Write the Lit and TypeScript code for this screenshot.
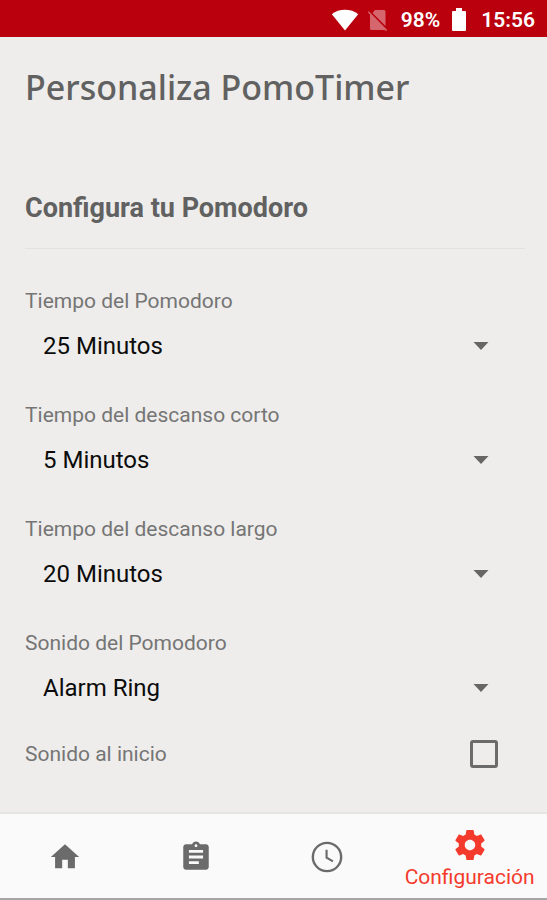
import { LitElement, html, css, svg } from "lit";
import { customElement, property, state } from "lit/decorators.js";
import { classMap } from "lit/directives/class-map.js";

interface Setting {
  id: string;
  label: string;
  value: string;
  options: string[];
}

const SETTINGS: Setting[] = [
  { id: "pomodoro", label: "Tiempo del Pomodoro", value: "25 Minutos", options: ["20 Minutos", "25 Minutos", "30 Minutos"] },
  { id: "short", label: "Tiempo del descanso corto", value: "5 Minutos", options: ["5 Minutos", "10 Minutos"] },
  { id: "long", label: "Tiempo del descanso largo", value: "20 Minutos", options: ["15 Minutos", "20 Minutos", "30 Minutos"] },
  { id: "sound", label: "Sonido del Pomodoro", value: "Alarm Ring", options: ["Alarm Ring"] },
];

const TABS = [
  { label: "Inicio", icon: svg`<path d="M10 20v-6h4v6h5v-8h3L12 3 2 12h3v8z"/>` },
  {
    label: "Tareas",
    icon: svg`<path d="M19 3h-4.18C14.4 1.84 13.3 1 12 1s-2.4.84-2.82 2H5c-1.1 0-2 .9-2 2v14c0 1.1.9 2 2 2h14c1.1 0 2-.9 2-2V5c0-1.1-.9-2-2-2zm-7 0c.55 0 1 .45 1 1s-.45 1-1 1-1-.45-1-1 .45-1 1-1zm2 14H7v-2h7v2zm3-4H7v-2h10v2zm0-4H7V7h10v2z"/>`,
  },
  {
    label: "Historial",
    icon: svg`<g fill="none" stroke="currentColor"><circle cx="12" cy="12" r="10" stroke-width="1.7"/><path d="M11.7 6.900v5.500l4.500 2.700" stroke-width="1.500"/></g>`,
  },
  {
    label: "Configuración",
    icon: svg`<path d="M19.43 12.98c.04-.32.07-.64.07-.98s-.03-.66-.07-.98l2.11-1.65c.19-.15.24-.42.12-.64l-2-3.46c-.12-.22-.39-.3-.61-.22l-2.49 1c-.52-.4-1.08-.73-1.69-.98l-.38-2.65C14.46 2.18 14.25 2 14 2h-4c-.25 0-.46.18-.49.42l-.38 2.65c-.61.25-1.17.59-1.69.98l-2.49-1c-.23-.09-.49 0-.61.22l-2 3.46c-.13.22-.07.49.12.64l2.11 1.65c-.04.32-.07.65-.07.98s.03.66.07.98l-2.11 1.65c-.19.15-.24.42-.12.64l2 3.46c.12.22.39.3.61.22l2.49-1c.52.4 1.08.73 1.69.98l.38 2.65c.03.24.24.42.49.42h4c.25 0 .46-.18.49-.42l.38-2.65c.61-.25 1.17-.59 1.69-.98l2.49 1c.23.09.49 0 .61-.22l2-3.46c.12-.22.07-.49-.12-.64l-2.11-1.65zM12 15.5c-1.93 0-3.5-1.57-3.5-3.5s1.57-3.5 3.5-3.5 3.5 1.57 3.5 3.5-1.57 3.5-3.5 3.5z"/>`,
  },
];

@customElement("status-bar")
class StatusBar extends LitElement {
  static styles = css`
    :host {
      display: flex;
      align-items: center;
      justify-content: flex-end;
      height: 37px;
      padding: 2px 12px 0 0;
      box-sizing: border-box;
      background: #ba000d;
      color: #fff;
      font-size: 21px;
      font-weight: 600;
      line-height: 24px;
    }
    svg { display: block; fill: currentColor; }
    .nosim { margin: 0 13px 0 8px; opacity: 0.4; }
    .battery { margin: 0 15px 0 12px; }
  `;
  render() {
    return html`
      <svg width="28" height="22" viewBox="0 0 28 22" aria-hidden="true">
        <path d="M14 21.5.8 5.200C4.500 2.200 9 .8 14 .8s9.500 1.400 13.200 4.400z" />
      </svg>
      <svg class="nosim" width="21" height="22" viewBox="0 0 21 22" aria-hidden="true">
        <path d="M8 1h9q1.500 0 1.500 1.500V17L5.500 4zM1.800 2.200.8 3.300 3 5.600V19.500Q3 21 4.500 21H17.500l1.800 1 .9-1z" />
      </svg>
      <span>98%</span>
      <svg class="battery" width="14" height="24" viewBox="0 0 14 24" aria-hidden="true">
        <path d="M4 0h6v3h3q1 0 1 1v18q0 1-1 1H1q-1 0-1-1V4q0-1 1-1h3z" />
      </svg>
      <span>15:56</span>
    `;
  }
}

@customElement("setting-select")
class SettingSelect extends LitElement {
  static styles = css`
    :host { display: block; }
    label { display: block; font-size: 21px; line-height: 28px; color: #757575; }
    .field { position: relative; margin-top: 9px; }
    select {
      appearance: none;
      display: block;
      width: 100%;
      height: 44px;
      padding: 0 64px 0 18px;
      border: 0;
      background: transparent;
      color: #0c0c0c;
      font: inherit;
      font-size: 24px;
    }
    svg { position: absolute; right: 36px; top: 18px; fill: #666; pointer-events: none; }
  `;
  @property({ attribute: false }) setting!: Setting;
  render() {
    const s = this.setting;
    return html`
      <label for=${s.id}>${s.label}</label>
      <div class="field">
        <select id=${s.id}>
          ${s.options.map((o) => html`<option ?selected=${o === s.value}>${o}</option>`)}
        </select>
        <svg width="16" height="8" viewBox="0 0 16 8" aria-hidden="true"><path d="M.5 0h15L8 8z" /></svg>
      </div>
    `;
  }
}

@customElement("tab-bar")
class TabBar extends LitElement {
  static styles = css`
    :host {
      display: flex;
      height: 88px;
      box-sizing: border-box;
      border-top: 2px solid #e4e4e2;
      border-bottom: 2px solid #a6a6a6;
      background: #fafafa;
    }
    button {
      flex: 131 1 0;
      min-width: 0;
      display: flex;
      flex-direction: column;
      align-items: center;
      justify-content: center;
      padding: 2px 0 0;
      border: 0;
      background: none;
      color: #6b6b6b;
      font: inherit;
      font-size: 21px;
      line-height: 28px;
    }
    .active { flex-grow: 155; padding-top: 6px; color: #f43a2c; }
    svg { display: block; width: 34px; height: 34px; fill: currentColor; }
    .active svg { width: 36px; height: 36px; }
  `;
  @state() private active = 3;
  render() {
    return html`${TABS.map(
      (t, i) => html`
        <button
          class=${classMap({ active: i === this.active })}
          aria-label=${t.label}
          @click=${() => (this.active = i)}
        >
          <svg viewBox="0 0 24 24" aria-hidden="true">${t.icon}</svg>
          ${i === this.active ? html`<span>${t.label}</span>` : ""}
        </button>
      `
    )}`;
  }
}

@customElement("app-root")
class AppRoot extends LitElement {
  static styles = css`
    :host {
      display: flex;
      flex-direction: column;
      min-height: 100vh;
      background: #eeedeb;
      color: #616161;
      font-family: Roboto, "Liberation Sans", sans-serif;
    }
    main { flex: 1; padding: 26px 22px 0 25px; }
    h1 {
      margin: 0;
      font: 500 34px/48px "Noto Sans", sans-serif;
    }
    h2 {
      margin: 0 0 38px;
      padding: 80px 0 22px;
      border-bottom: 1px solid #e2e2e0;
      font-size: 27px;
      font-weight: 700;
      line-height: 35px;
    }
    .settings { display: grid; gap: 33px; margin-bottom: 30px; }
    .check {
      display: flex;
      align-items: center;
      justify-content: space-between;
      padding-right: 27px;
      font-size: 21px;
      line-height: 28px;
      color: #757575;
    }
    input {
      appearance: none;
      width: 28px;
      height: 28px;
      margin: 0;
      border: 3px solid #6b6b6b;
      border-radius: 3px;
    }
    input:checked { background: #f43a2c; }
  `;
  render() {
    return html`
      <status-bar></status-bar>
      <main>
        <h1>Personaliza PomoTimer</h1>
        <h2>Configura tu Pomodoro</h2>
        <div class="settings">
          ${SETTINGS.map((s) => html`<setting-select .setting=${s}></setting-select>`)}
        </div>
        <div class="check">
          <label for="start-sound">Sonido al inicio</label>
          <input id="start-sound" type="checkbox" />
        </div>
      </main>
      <tab-bar></tab-bar>
    `;
  }
}
